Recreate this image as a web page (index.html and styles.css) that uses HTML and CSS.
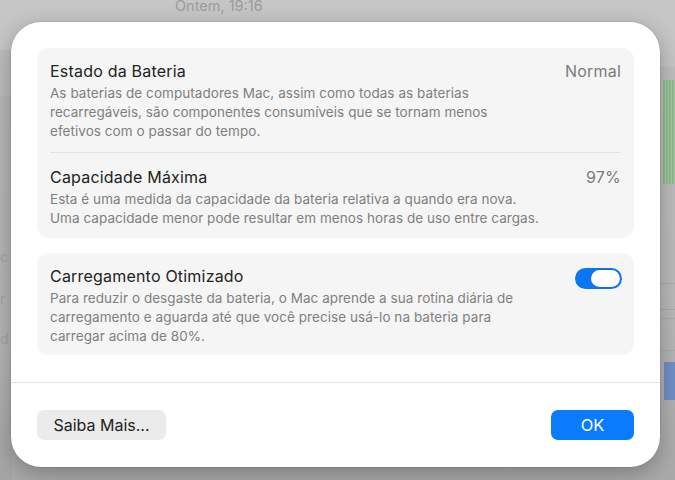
FILE: index.html
```html
<!DOCTYPE html>
<html lang="pt-BR">
<head>
<meta charset="utf-8">
<title>Estado da Bateria</title>
<link rel="stylesheet" href="styles.css">
</head>
<body>
<div class="desktop">
  <div class="win-title">Ontem, 19:16</div>
  <div class="side-left">
    <span class="ghost g1">c</span>
    <span class="ghost g2">r</span>
    <span class="ghost g3">d</span>
  </div>
  <div class="side-right">
    <div class="chart"></div>
    <div class="rule r1"></div>
    <div class="rule r2"></div>
    <div class="rule r3"></div>
    <div class="rule r4"></div>
    <div class="sel-row"></div>
  </div>
</div>

<div class="sheet">
  <div class="sheet-body">
    <section class="group">
      <div class="row">
        <div class="row-head">
          <h2 class="row-title">Estado da Bateria</h2>
          <span class="row-value">Normal</span>
        </div>
        <p class="row-desc">As baterias de computadores Mac, assim como todas as baterias<br>recarregáveis, são componentes consumíveis que se tornam menos<br>efetivos com o passar do tempo.</p>
      </div>
      <div class="row">
        <div class="row-head">
          <h2 class="row-title">Capacidade Máxima</h2>
          <span class="row-value">97%</span>
        </div>
        <p class="row-desc">Esta é uma medida da capacidade da bateria relativa a quando era nova.<br>Uma capacidade menor pode resultar em menos horas de uso entre cargas.</p>
      </div>
    </section>

    <section class="group group-opt">
      <div class="row">
        <div class="row-head">
          <h2 class="row-title">Carregamento Otimizado</h2>
          <span class="switch on" role="switch" aria-checked="true"><span class="knob"></span></span>
        </div>
        <p class="row-desc">Para reduzir o desgaste da bateria, o Mac aprende a sua rotina diária de<br>carregamento e aguarda até que você precise usá-lo na bateria para<br>carregar acima de 80%.</p>
      </div>
    </section>
  </div>

  <footer class="sheet-foot">
    <button class="btn btn-plain">Saiba Mais...</button>
    <button class="btn btn-default">OK</button>
  </footer>
</div>
</body>
</html>
```
FILE: styles.css
```css
* { box-sizing: border-box; }

html, body {
  margin: 0;
  padding: 0;
  width: 675px;
  height: 480px;
  overflow: hidden;
}

body {
  position: relative;
  background: #bdbdbd;
  font-family: Inter, "Noto Sans", "Liberation Sans", sans-serif;
  -webkit-font-smoothing: antialiased;
}

/* dimmed window behind the sheet */
.desktop {
  position: absolute;
  inset: 0;
  background: linear-gradient(#c6c6c6 0, #c6c6c6 66px, #bebebe 67px, #b9b9b9 300px, #a9a9a9 480px);
}

.win-title {
  position: absolute;
  left: 175px;
  top: -3px;
  font-size: 14.5px;
  color: #9c9c9c;
}

.side-left {
  position: absolute;
  left: 0;
  top: 50px;
  width: 12px;
  height: 430px;
  background: linear-gradient(#bdbdbd 0, #bdbdbd 45px, #b7b7b7 46px, #b5b5b5 300px, #a4a4a4 430px);
}

.ghost {
  position: absolute;
  left: 0;
  font-size: 14px;
  color: #a3a3a3;
}
.g1 { top: 198px; }
.g2 { top: 240px; }
.g3 { top: 280px; }

.side-right {
  position: absolute;
  right: 0;
  top: 0;
  width: 16px;
  height: 480px;
}

.chart {
  position: absolute;
  left: 4px;
  top: 80px;
  width: 12px;
  height: 104px;
  background: repeating-linear-gradient(90deg, #8fbc8f 0 2px, #a9cfa7 2px 3px);
}

.rule {
  position: absolute;
  left: 0;
  width: 16px;
  height: 1px;
  background: #aaaaaa;
}
.r1 { top: 283px; }
.r2 { top: 309px; }
.r3 { top: 318px; }
.r4 { top: 350px; }

.sel-row {
  position: absolute;
  left: 5px;
  top: 362px;
  width: 11px;
  height: 38px;
  background: #6f8fc6;
}

/* the sheet */
.sheet {
  position: absolute;
  left: 11px;
  top: 22px;
  width: 649px;
  height: 445px;
  background: #ffffff;
  border-radius: 30px;
  box-shadow: 0 6px 22px rgba(0, 0, 0, 0.28), 0 0 0 0.5px rgba(0, 0, 0, 0.12);
  display: flex;
  flex-direction: column;
  overflow: hidden;
}

.sheet-body {
  padding: 26px 26px 0;
  display: flex;
  flex-direction: column;
  gap: 15px;
}

.group {
  background: #f5f5f5;
  border-radius: 12px;
  padding: 0 13px;
}

.row {
  padding: 13px 0 11px;
}
.row + .row {
  border-top: 1px solid #e2e2e2;
  padding-top: 14px;
  padding-bottom: 10px;
}
.group-opt .row {
  padding-bottom: 9px;
}

.row-head {
  display: flex;
  justify-content: space-between;
  align-items: flex-start;
  height: 20px;
}

.row-title {
  margin: 0;
  font-size: 16px;
  line-height: 21px;
  font-weight: 400;
  color: #222222;
  letter-spacing: 0.2px;
}

.row-value {
  font-size: 16px;
  line-height: 21px;
  color: #7b7b7b;
  letter-spacing: 0.2px;
}

.row-desc {
  margin: 3px 0 0;
  font-size: 13.5px;
  line-height: 19px;
  color: #7f7f7f;
  letter-spacing: 0.05px;
}

/* toggle */
.switch {
  position: relative;
  display: block;
  width: 47px;
  height: 21px;
  margin-top: 2px;
  margin-right: -1px;
  border-radius: 11px;
  background: #0b76f2;
}
.switch .knob {
  position: absolute;
  right: 2px;
  top: 2px;
  width: 29px;
  height: 17px;
  border-radius: 9px;
  background: #ffffff;
  box-shadow: 0 0 0 0.5px rgba(0, 0, 0, 0.15);
}

.sheet-foot {
  margin-top: auto;
  border-top: 1px solid #e3e3e3;
  padding: 27px 26px 27px;
  display: flex;
  justify-content: space-between;
  align-items: center;
}

.btn {
  height: 30px;
  border: none;
  border-radius: 7px;
  font-family: inherit;
  font-size: 16px;
  padding: 0;
  cursor: default;
}

.btn-plain {
  width: 129px;
  background: #ebebeb;
  color: #222222;
}

.btn-default {
  width: 83px;
  background: #0b7bfe;
  color: #ffffff;
  font-size: 16.5px;
}
```
